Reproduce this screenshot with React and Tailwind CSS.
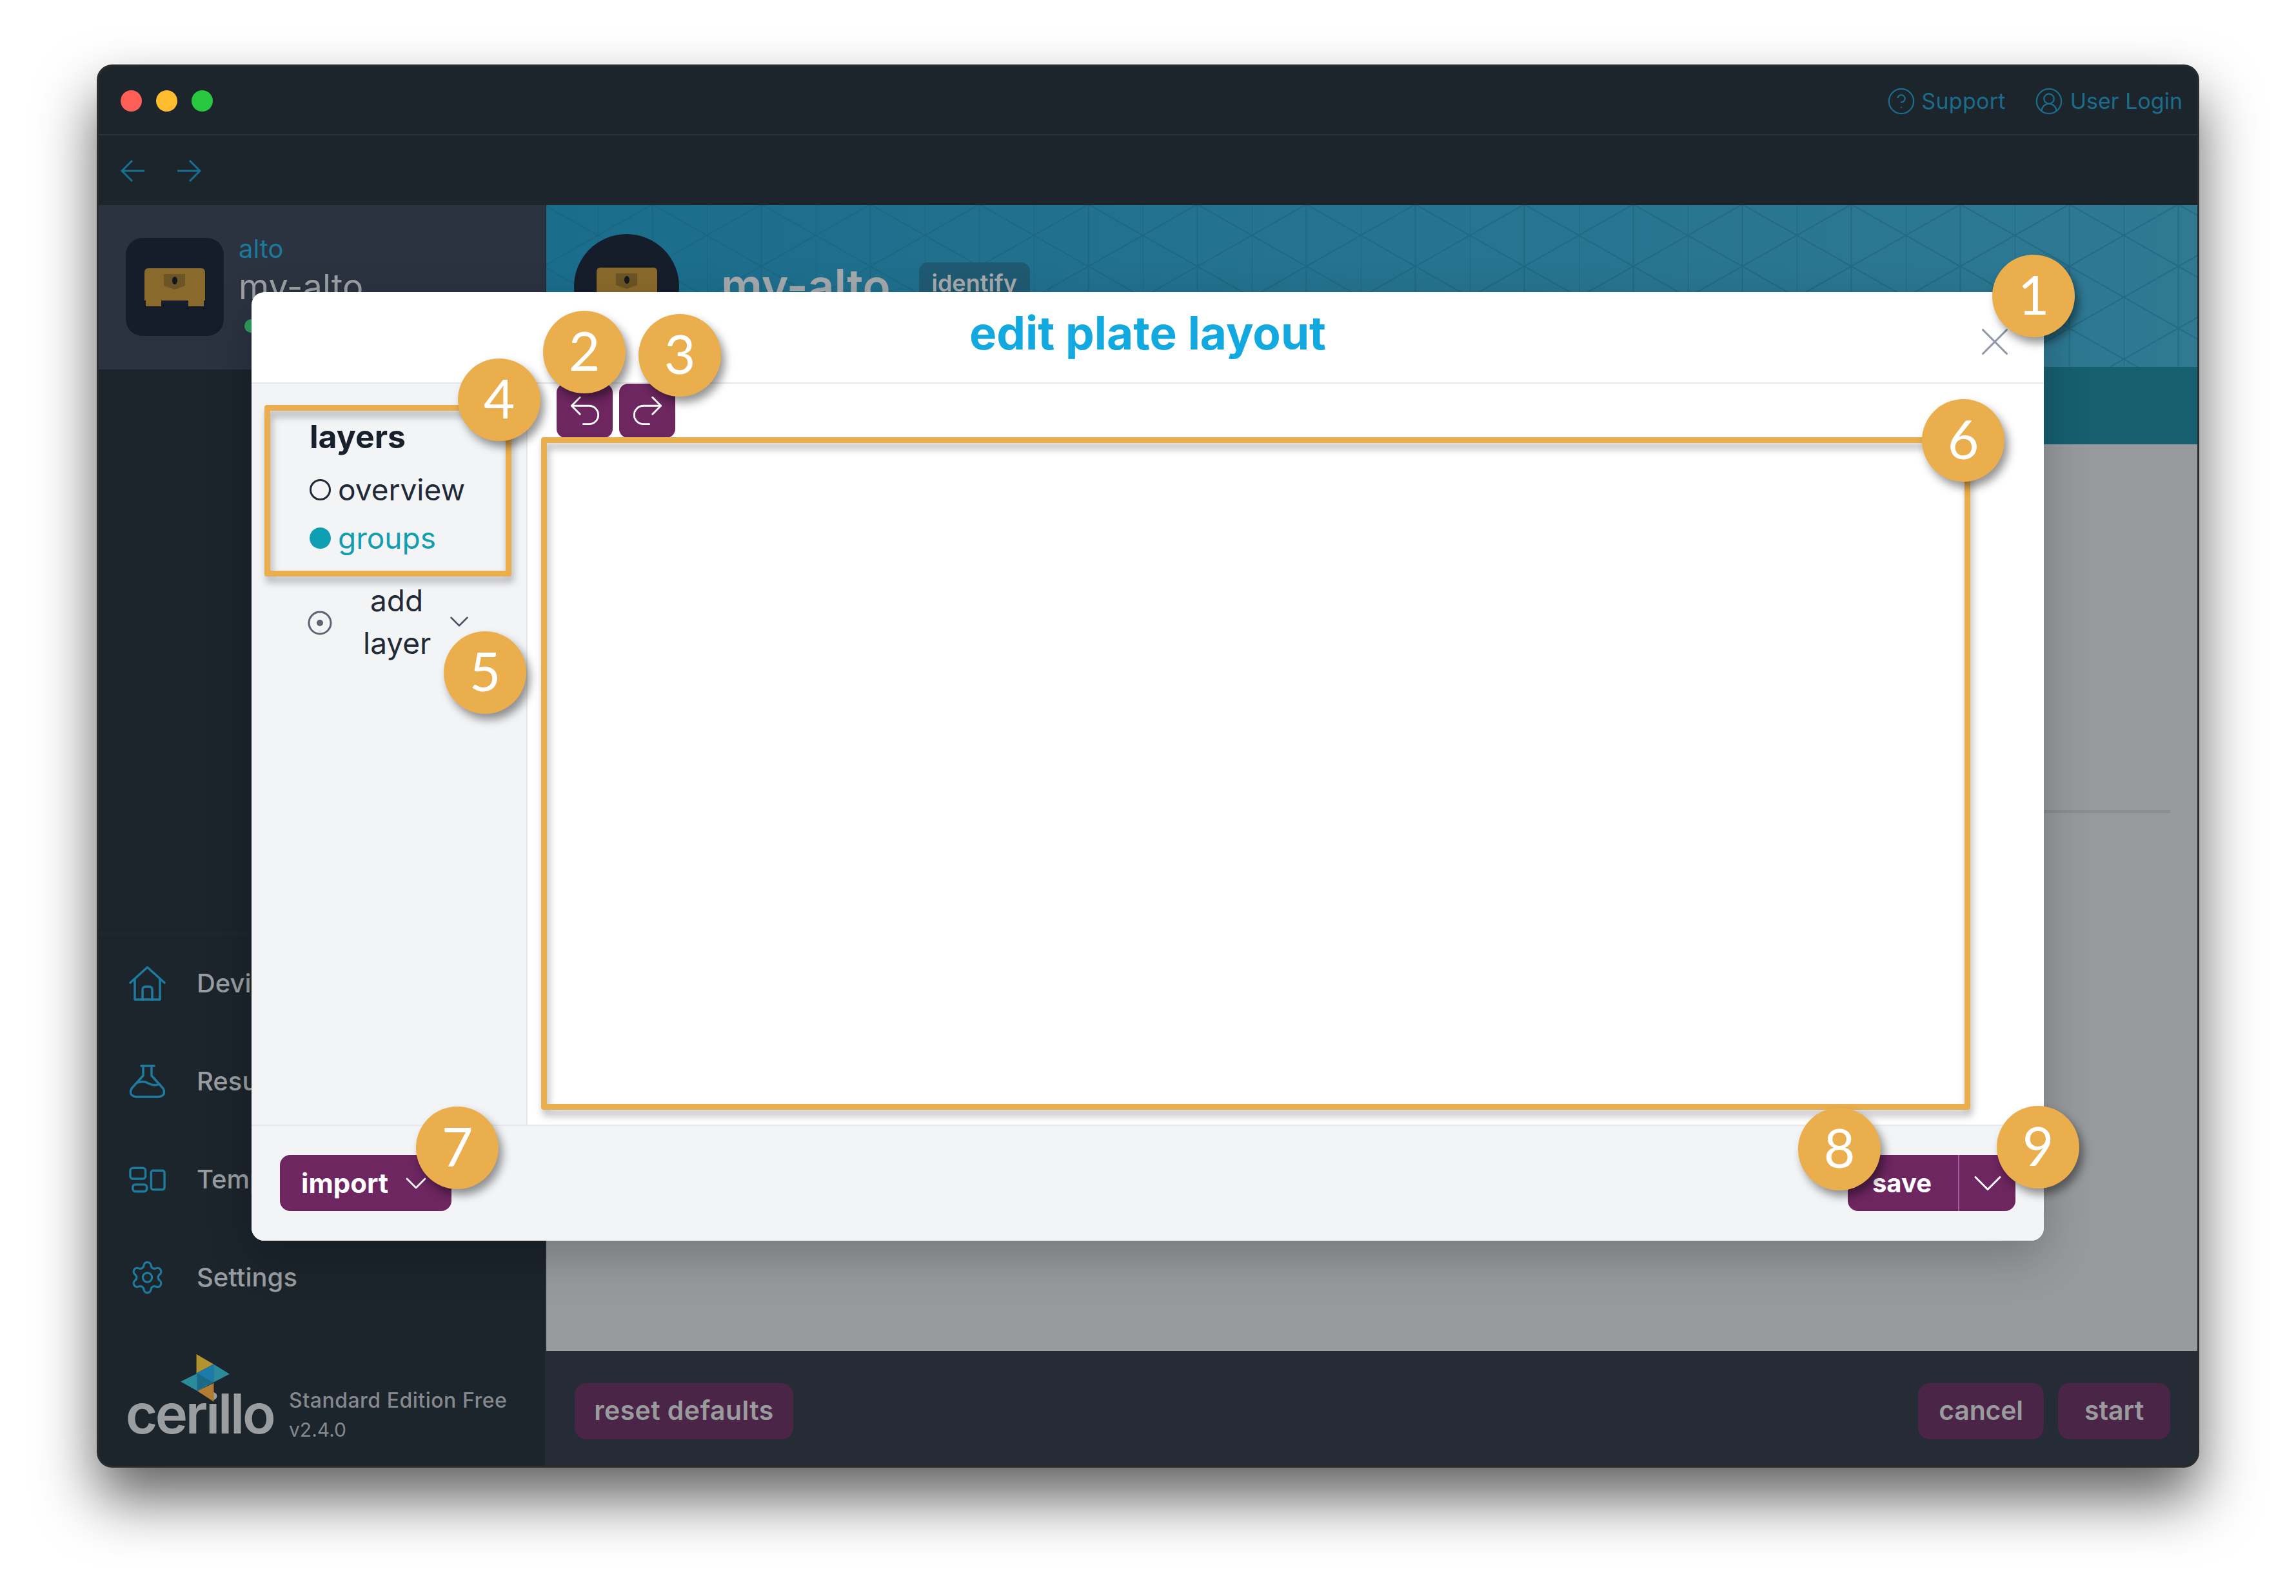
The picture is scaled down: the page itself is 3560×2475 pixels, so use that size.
import React from "react";
import { CircleHelp, CircleUserRound, Undo2, Redo2, ChevronDown, X, Settings } from "lucide-react";

function Chest({ className }) {
  return (
    <svg className={className} viewBox="0 0 94 59" width="94" height="59">
      <path d="M6 0H88Q94 0 94 7V50H92V59H68V50H26V59H2V50H0V7Q0 0 6 0Z" fill="#8a6a2c" />
      <path d="M30 9H63V27L47 33L30 27Z" fill="#6b5425" />
      <ellipse cx="47" cy="19" rx="4" ry="6" fill="#15181c" />
    </svg>
  );
}

function HomeIcon() {
  return (
    <svg width="57" height="54" viewBox="0 0 57 54" fill="none" stroke="#1f7b9e" strokeWidth="3.5" strokeLinejoin="round" strokeLinecap="round">
      <path d="M2 26L28.500 2L55 26" />
      <path d="M9 20V52H48V20" />
      <path d="M21 52V37Q21 32 26 32H31Q36 32 36 37V52" />
    </svg>
  );
}

function FlaskIcon() {
  return (
    <svg width="57" height="52" viewBox="0 0 57 52" fill="none" stroke="#1f7b9e" strokeWidth="3.500" strokeLinejoin="round" strokeLinecap="round">
      <path d="M19 2H39" />
      <path d="M22 2V17L4 37Q-1 48 11 50H46Q58 48 53 37L35 17V2" />
      <path d="M13 28Q22 24 30 29Q40 34 47 30" />
    </svg>
  );
}

function LayoutIcon() {
  return (
    <svg width="58" height="41" viewBox="0 0 58 41" fill="none" stroke="#1f7b9e" strokeWidth="3.500">
      <rect x="2" y="2" width="24" height="17" rx="4" />
      <rect x="6" y="28" width="22" height="11" rx="4" />
      <rect x="35" y="6" width="21" height="30" rx="3" />
    </svg>
  );
}

function Logo() {
  return (
    <svg width="78" height="77" viewBox="295 55 235 230">
      <polygon points="372,60 452,107 372,150" fill="#b3932f" />
      <polygon points="452,107 527,153 452,192" fill="#2b8a9c" />
      <polygon points="298,188 376,150 376,232" fill="#2b8a9c" />
      <polygon points="376,232 453,195 453,282" fill="#b07d33" />
      <polygon points="372,150 452,107 452,192 376,232" fill="#1c7ba8" />
      <polygon points="376,150 447,190 376,228" fill="#1a6a85" />
    </svg>
  );
}

function NavItem({ icon, label }) {
  return (
    <div className="flex h-[152px] items-center gap-[48px] pl-[47px]">
      <div className="flex w-[57px] justify-center">{icon}</div>
      <span className="text-[40px] font-medium text-[#999da1]">{label}</span>
    </div>
  );
}

function Badge({ className, n }) {
  return (
    <div className={"absolute z-30 flex h-[128px] w-[128px] items-center justify-center rounded-full bg-[#eaae4d] pb-[6px] text-[84px] font-normal leading-none text-white shadow-[6px_9px_14px_rgba(0,0,0,0.42)] [font-family:Lato,sans-serif] " + className}>
      {n}
    </div>
  );
}

const frameCls = "absolute z-20 rounded-[4px] border-[9px] border-[#eaae4d] [filter:drop-shadow(3px_9px_6px_rgba(0,0,0,0.28))]";

function Button({ className, children }) {
  return (
    <div className={"flex h-[87px] items-center justify-center rounded-[18px] bg-[#4a2548] text-[41px] font-semibold text-[#9a9b9d] " + className}>
      {children}
    </div>
  );
}

export default function App() {
  return (
    <div className="relative h-[2475px] w-[3560px] overflow-hidden bg-white pl-[150px] pt-[100px] [font-family:Inter,sans-serif]">
      {/* window */}
      <div className="flex h-[2176px] w-[3260px] flex-col overflow-hidden rounded-[24px] border-[3px] border-[#2c2c2c] bg-[#1c242c] shadow-[0_48px_90px_rgba(0,0,0,0.62)]">
        {/* title bar */}
        <div className="flex h-[107px] shrink-0 items-center justify-between border-b-2 border-[#2a313c] pl-[34px] pr-[23px] pt-[2px]">
          <div className="flex gap-[22px]">
            <div className="h-[33px] w-[33px] rounded-full bg-[#ff5f57]" />
            <div className="h-[33px] w-[33px] rounded-full bg-[#febc2e]" />
            <div className="h-[33px] w-[33px] rounded-full bg-[#28c840]" />
          </div>
          <div className="flex items-center gap-[48px] text-[34px] text-[#1c6c8b]">
            <div className="flex items-center gap-[12px]">
              <CircleHelp className="-m-[4px]" size={46} strokeWidth={1.2} />
              <span className="tracking-[0.3px]">Support</span>
            </div>
            <div className="flex items-center gap-[14px]">
              <CircleUserRound className="-m-[4px]" size={46} strokeWidth={1.2} />
              <span>User Login</span>
            </div>
          </div>
        </div>
        {/* toolbar */}
        <div className="flex h-[108px] shrink-0 items-center gap-[49px] pl-[34px] pt-[2px]">
          <svg width="38" height="34" viewBox="0 0 38 34" fill="none" stroke="#1a6f8f" strokeWidth="3">
            <path d="M37 17H2M18 1L2 17L18 33" />
          </svg>
          <svg width="38" height="34" viewBox="0 0 38 34" fill="none" stroke="#1a6f8f" strokeWidth="3">
            <path d="M1 17H36M20 1L36 17L20 33" />
          </svg>
        </div>
        {/* body */}
        <div className="flex min-h-0 flex-1">
          {/* sidebar */}
          <div className="flex w-[694px] shrink-0 flex-col border-r-2 border-[#262d36]">
            <div className="flex h-[255px] shrink-0 items-start gap-[23px] bg-[#2b3240] pl-[42px] pt-[44px]">
              <div className="mt-[7px] flex h-[152px] w-[152px] items-center justify-center rounded-[26px] bg-[#151d2b]">
                <Chest />
              </div>
              <div className="relative flex flex-col">
                <span className="text-[40px] leading-[48px] text-[#1a7a9c]">alto</span>
                <span className="mt-[4px] text-[54px] leading-[62px] text-[#9c9fa3]">my-alto</span>
                <div className="absolute left-[9px] top-[133px] h-[21px] w-[21px] rounded-full bg-[#2f9d5c]" />
              </div>
            </div>
            <div className="flex-1 border-b-2 border-[#202830]" />
            <NavItem icon={<HomeIcon />} label="Devices" />
            <NavItem icon={<FlaskIcon />} label="Results" />
            <NavItem icon={<LayoutIcon />} label="Templates" />
            <NavItem icon={<Settings size={62} strokeWidth={1.35} className="text-[#1f7b9e]" />} label="Settings" />
            <div className="flex h-[216px] shrink-0 items-start pl-[42px]">
              <div className="mt-[41px] flex w-[229px] flex-col items-center">
                <div className="z-10 -mb-[20px] ml-[16px]">
                  <Logo />
                </div>
                <span className="text-[85px] font-semibold leading-[76px] tracking-[-3.300px] text-[#9b9ea1]">cerillo</span>
              </div>
              <div className="ml-[24px] mt-[92px] flex flex-col text-[#85898e]">
                <span className="text-[32px] font-medium leading-[46px] tracking-[0.5px]">Standard Edition Free</span>
                <span className="text-[30px] leading-[44px]">v2.4.0</span>
              </div>
            </div>
          </div>
          {/* main */}
          <div className="flex min-w-0 flex-1 flex-col">
            <div className="relative flex h-[251px] shrink-0 items-start bg-linear-to-r from-[#1a6d8c] to-[#2f7993] pl-[43px] pt-[45px]">
              <svg className="absolute inset-0" width="100%" height="100%">
                <defs>
                  <pattern id="tri" x="80" y="47" width="169" height="96" patternUnits="userSpaceOnUse">
                    <path d="M0 0L169 96M169 0L0 96M0 0V96M84.500 0V96" fill="none" stroke="#1b5f7c" strokeOpacity="0.55" strokeWidth="2" />
                  </pattern>
                </defs>
                <rect width="100%" height="100%" fill="url(#tri)" />
              </svg>
              <div className="relative flex h-[163px] w-[163px] items-center justify-center rounded-full bg-[#151d2b]">
                <Chest />
              </div>
              <div className="relative ml-[65px] mt-[40px] flex items-center gap-[44px]">
                <span className="text-[71px] font-semibold leading-[80px] text-[#a5a9ab]">my-alto</span>
                <div className="-mt-[8px] flex h-[64px] w-[172px] items-center justify-center rounded-[14px] bg-[#1f5a72] text-[36px] font-semibold text-[#a7abad]">identify</div>
              </div>
            </div>
            <div className="h-[120px] shrink-0 bg-[#165f6f]" />
            <div className="min-h-0 flex-1 bg-[#97999c] pt-[567px]">
              <div className="ml-auto mr-[42px] h-[5px] w-[800px] bg-[#8a8d91]" />
            </div>
            <div className="flex h-[178px] shrink-0 items-center justify-between bg-[#252c35] pl-[44px] pr-[42px] pt-[8px]">
              <Button className="w-[339px] tracking-[0.4px]">reset defaults</Button>
              <div className="flex gap-[22px]">
                <Button className="w-[195px] tracking-[-0.2px]">cancel</Button>
                <Button className="w-[174px]">start</Button>
              </div>
            </div>
          </div>
        </div>
      </div>

      {/* modal */}
      <div className="absolute left-[390px] top-[453px] z-10 flex h-[1471px] w-[2779px] flex-col overflow-hidden rounded-[20px] bg-white shadow-[0_24px_70px_rgba(0,0,0,0.22)]">
        <div className="relative flex h-[142px] shrink-0 justify-center border-b-2 border-[#e5e7eb] pt-[20px]">
          <span className="text-[71px] font-bold leading-[86px] text-[#12a9e0]">edit plate layout</span>
          <X className="absolute right-[39px] top-[40px] text-[#9096a6]" size={74} strokeWidth={1} />
        </div>
        <div className="flex min-h-0 flex-1">
          <div className="flex w-[428px] shrink-0 flex-col border-r-2 border-[#e5e7eb] bg-[#f3f4f6] pl-[90px] pt-[50px]">
            <span className="text-[50px] font-bold leading-[64px] text-[#17202c]">layers</span>
            <div className="mt-[18px] flex h-[64px] items-center gap-[11px] text-[46px] text-[#1f2937]">
              <div className="h-[33px] w-[33px] rounded-full border-[3px] border-[#1f2937]" />
              <span>overview</span>
            </div>
            <div className="mt-[11px] flex h-[64px] items-center gap-[11px] text-[46px] text-[#139db1]">
              <div className="h-[33px] w-[33px] rounded-full bg-[#0e9fb3]" />
              <span>groups</span>
            </div>
            <div className="mt-[32px] flex items-center">
              <svg width="38" height="38" viewBox="0 0 38 38" fill="none" className="-ml-[3px] mt-[3px]">
                <circle cx="19" cy="19" r="17" stroke="#5b6472" strokeWidth="3" />
                <circle cx="19" cy="19" r="5" fill="#5b6472" />
              </svg>
              <div className="ml-[48px] w-[104px] text-center text-[46px] leading-[66px] text-[#1f2937]">add layer</div>
              <ChevronDown className="ml-[20px] -mr-[12px] text-[#4b5563]" size={50} strokeWidth={1.2} />
            </div>
          </div>
          <div className="flex-1 bg-white">
            <div className="flex gap-[10px] pl-[45px]">
              <div className="flex h-[84px] w-[87px] items-center justify-center rounded-[14px] bg-[#6d2660] text-white">
                <Undo2 size={62} strokeWidth={1.1} />
              </div>
              <div className="flex h-[84px] w-[87px] items-center justify-center rounded-[14px] bg-[#6d2660] text-white">
                <Redo2 size={62} strokeWidth={1.1} />
              </div>
            </div>
          </div>
        </div>
        <div className="flex h-[180px] shrink-0 items-start justify-between border-t-2 border-[#e5e7eb] bg-[#f3f4f6] px-[44px] pt-[45px]">
          <div className="flex h-[87px] w-[266px] items-center rounded-[16px] bg-[#6d2660] pl-[33px] text-[42px] font-bold text-white">
            <span>import</span>
            <ChevronDown className="ml-[15px] text-white" size={56} strokeWidth={1.2} />
          </div>
          <div className="flex h-[87px] w-[260px] items-center rounded-[16px] bg-[#6d2660] text-white">
            <div className="flex h-full w-[171px] items-center justify-end pr-[41px] text-[40px] font-bold">save</div>
            <div className="h-full w-[2px] bg-[#a0619a]" />
            <div className="flex flex-1 items-center justify-center">
              <ChevronDown size={76} strokeWidth={0.95} />
            </div>
          </div>
        </div>
      </div>

      {/* annotations */}
      <div className={frameCls + " left-[410px] top-[628px] h-[266px] w-[383px]"} />
      <div className={frameCls + " left-[839px] top-[678px] h-[1043px] w-[2216px]"} />
      <Badge className="left-[3089px] top-[395px]" n="1" />
      <Badge className="left-[842px] top-[482px]" n="2" />
      <Badge className="left-[990px] top-[487px]" n="3" />
      <Badge className="left-[710px] top-[556px]" n="4" />
      <Badge className="left-[688px] top-[979px]" n="5" />
      <Badge className="left-[2980px] top-[619px]" n="6" />
      <Badge className="left-[645px] top-[1716px]" n="7" />
      <Badge className="left-[2788px] top-[1718px]" n="8" />
      <Badge className="left-[3096px] top-[1715px]" n="9" />
    </div>
  );
}
